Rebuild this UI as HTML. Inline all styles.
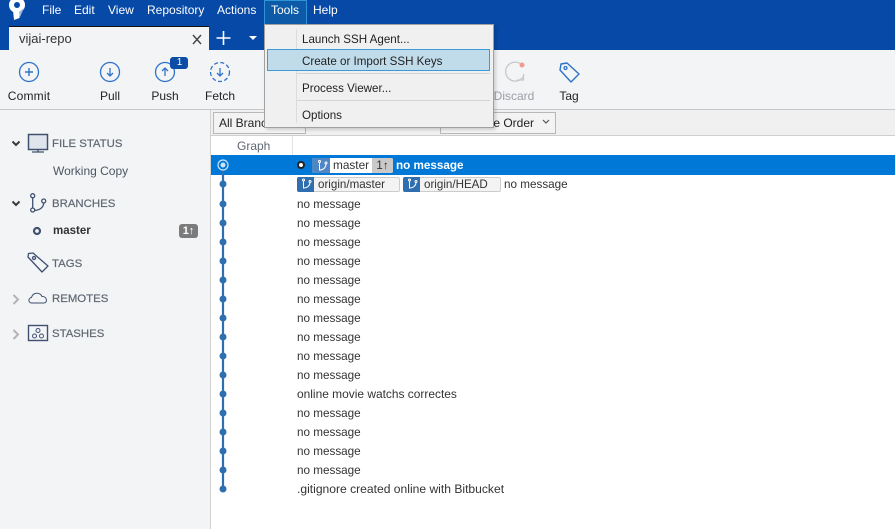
<!DOCTYPE html>
<html><head><meta charset="utf-8"><style>
html,body{margin:0;padding:0;width:895px;height:529px;overflow:hidden;background:#fff}
body{position:relative;font-family:"Liberation Sans",sans-serif;font-size:12.5px;color:#2b2b2b}
svg{overflow:visible}
.a{position:absolute;white-space:nowrap}
.m{position:absolute;top:3px;color:#fff;line-height:14px;font-size:12px}
.t{position:absolute;top:89px;line-height:14px;font-size:12px;color:#222;transform:translateX(-50%);white-space:nowrap}
.s{position:absolute;left:52px;margin-top:1px;font-size:11.4px;color:#5f6873;line-height:14px;white-space:nowrap;-webkit-text-stroke:.2px #5f6873}
.r{position:absolute;left:297px;margin-top:1px;line-height:14px;font-size:11.7px;color:#333;white-space:nowrap}
.i{position:absolute;left:302px;margin-top:1px;font-size:11.6px;line-height:14px;color:#222;white-space:nowrap}
.tag{position:absolute;top:177px;height:13px;background:#f3f3f3;border:1px solid #ccc;border-radius:2px;line-height:14px;font-size:11.6px;color:#333;white-space:nowrap}
.ti{position:absolute;left:-1px;top:-1px;width:17px;height:15px;background:#2f6fb0;border-radius:2px 0 0 2px}
</style></head><body>
<div class="a" style="left:0;top:0;width:895px;height:50px;background:#0749a6"></div>
<svg class="a" style="left:0;top:0" width="30" height="22" viewBox="0 0 30 22"><circle cx="17" cy="5" r="8" fill="#fff"/><path d="M13 10H20L19.500 18L14 20Z" fill="#fff"/><path d="M19 12L24 8L20 17Z" fill="#9cb8de"/><circle cx="17" cy="5" r="3" fill="#0749a6"/></svg>
<div class="m" style="left:42px">File</div><div class="m" style="left:74px">Edit</div><div class="m" style="left:108px">View</div><div class="m" style="left:147px">Repository</div><div class="m" style="left:217px">Actions</div>
<div class="a" style="left:264px;top:0;width:41px;height:23px;background:#0d5aa8;border:1px solid #2f95d6"></div>
<div class="m" style="left:271px">Tools</div><div class="m" style="left:313px">Help</div>
<div class="a" style="left:9px;top:26px;width:200px;height:24px;background:#f3f4f6;border-top:1px solid #111;box-sizing:border-box"></div>
<div class="a" style="left:19px;top:31px;font-size:13px;line-height:15px;color:#333">vijai-repo</div>
<svg class="a" style="left:191px;top:33px" width="15" height="13"><path d="M2 2L10 11M10 2L2 11" stroke="#444" stroke-width="1.4"/></svg>
<svg class="a" style="left:216px;top:31px" width="15" height="15"><path d="M7.500 0V14M.5 7H14.500" stroke="#fff" stroke-width="1.600"/></svg>
<svg class="a" style="left:249px;top:36px" width="9" height="5"><path d="M0 0H8L4 4Z" fill="#fff"/></svg>
<div class="a" style="left:0;top:50px;width:895px;height:59px;background:#f3f4f6"></div>
<div class="a" style="left:0;top:109px;width:895px;height:1px;background:#c8c8c8"></div>
<svg class="a" style="left:0;top:50px" width="600" height="50" fill="none" stroke="#2d73c9" stroke-width="1.300">
<circle cx="29" cy="22" r="9.500"/><path d="M25 22H33M29 18V26" stroke-width="1.400"/>
<circle cx="110" cy="22" r="9.500"/><path d="M110 18V26M107 23L110 26L113 23"/>
<circle cx="165" cy="22" r="9.500"/><path d="M165 18V26M162 21L165 18L168 21"/>
<rect x="170" y="7" width="18" height="12" rx="3" fill="#0a4ca6" stroke="none"/>
<circle cx="220" cy="22" r="9.500" stroke-dasharray="4 2.400"/><path d="M220 18V26M217 23L220 26L223 23"/>
<path d="M522 15A9.500 9.500 0 1 0 523 27M517 30H523.500V24" stroke="#c3c8cd"/><circle cx="522" cy="15" r="2.500" fill="#f39a90" stroke="none"/>
<path d="M560 20L561 14L567 13L579 24L571 32Z" stroke-linejoin="round" stroke-width="1.400"/><circle cx="565.500" cy="18" r="1.500"/>
</svg>
<div class="a" style="left:173px;top:57px;width:13px;text-align:center;font-size:10px;line-height:12px;color:#fff">1</div>
<div class="t" style="left:29px;letter-spacing:.2px">Commit</div><div class="t" style="left:110px">Pull</div><div class="t" style="left:165px">Push</div><div class="t" style="left:220px">Fetch</div>
<div class="t" style="left:514px;color:#9a9ea5">Discard</div><div class="t" style="left:569px">Tag</div>
<div class="a" style="left:0;top:110px;width:210px;height:419px;background:#f3f4f6"></div>
<div class="a" style="left:210px;top:110px;width:1px;height:419px;background:#d2d2d2"></div>
<div class="a" style="left:211px;top:110px;width:684px;height:25px;background:#f0f0f0"></div>
<div class="a" style="left:211px;top:135px;width:684px;height:1px;background:#cfcfcf"></div>
<div class="a" style="left:213px;top:112px;width:86px;height:20px;background:#f3f3f3;border:1px solid #b8b8b8;line-height:20px;padding-left:5px;font-size:12px;color:#222">All Branches</div>
<div class="a" style="left:319px;top:127px;width:14px;height:1px;background:#777"></div>
<div class="a" style="left:440px;top:112px;width:114px;height:20px;background:#f3f3f3;border:1px solid #b8b8b8;line-height:20px;font-size:12px;color:#222;text-align:right;box-sizing:content-box"><span style="position:absolute;right:21px">Date Order</span></div>
<svg class="a" style="left:542px;top:119px" width="8" height="6" fill="none"><path d="M1 1L4 4L7 1" stroke="#555" stroke-width="1.200"/></svg>
<div class="a" style="left:237px;top:139px;font-size:12px;line-height:14px;color:#5f6873">Graph</div>
<div class="a" style="left:292px;top:136px;width:1px;height:19px;background:#e3e3e3"></div>
<div class="a" style="left:211px;top:155px;width:684px;height:20px;background:#0078d7"></div>

<svg class="a" style="left:14px;top:133px" width="50" height="215" fill="none" stroke="#3f5070" stroke-width="1.300">
<path d="M-1.500 8.500L2 12L5.500 8.500" stroke="#3a3a3a" stroke-width="2"/>
<rect x="14.500" y="1.500" width="19" height="15" fill="#e0e4ec" stroke-width="1.500"/><path d="M18 19H30M24 17V19"/>
<path d="M-1.500 68.500L2 72L5.500 68.500" stroke="#3a3a3a" stroke-width="2"/>
<circle cx="18.700" cy="62.700" r="2"/><circle cx="18.700" cy="77" r="2"/><circle cx="29.700" cy="68" r="2"/><path d="M18.700 64.700V75M29.700 70C29.500 75 25 77 20.700 77.500"/>
<circle cx="23" cy="98" r="3" stroke-width="2.200"/>
<path d="M14 124L14.500 120.500L19 120L34 133L28 139Z" stroke-linejoin="round"/><circle cx="20" cy="125" r="1.500"/>
<path d="M-.5 162L4 166.500L-.5 171" stroke="#b4b4b4" stroke-width="2"/>
<path d="M18 170C14 170 14 165 17.500 164.500C19 159 26 159 28 163.500C33 163 34 170 30 170Z" stroke-width="1"/>
<path d="M-.5 197L4 201.500L-.5 206" stroke="#b4b4b4" stroke-width="2"/>
<rect x="14.500" y="192.500" width="19" height="15" stroke-width="1.400"/><circle cx="24" cy="197.500" r="2" stroke-width="1"/><circle cx="20.500" cy="203" r="2" stroke-width="1"/><circle cx="27.500" cy="203" r="2" stroke-width="1"/>
</svg>
<div class="s" style="top:136px">FILE STATUS</div>
<div class="a" style="left:53px;top:164px;font-size:12px;line-height:14px;color:#4b5563">Working Copy</div>
<div class="s" style="top:196px">BRANCHES</div>
<div class="a" style="left:53px;top:224px;color:#333;font-weight:bold;font-size:11.500px;line-height:14px">master</div>
<div class="a" style="left:179px;top:224px;width:19px;height:14px;background:#7b7b7b;border-radius:3px;color:#fff;font-weight:bold;font-size:11px;line-height:14px;text-align:center">1↑</div>
<div class="s" style="top:256px">TAGS</div>
<div class="s" style="top:291px">REMOTES</div>
<div class="s" style="top:326px">STASHES</div>

<svg class="a" style="left:211px;top:155px" width="30" height="345">
<path d="M12 10V334" stroke="#2f6fb0" stroke-width="2.200"/>
<circle cx="12" cy="10" r="5" fill="#0078d7" stroke="#cfe4f7" stroke-width="1.200"/><circle cx="12" cy="10" r="2.500" fill="#cfe4f7"/>
<g fill="#2f6fb0"><circle cx="12" cy="29" r="3.500"/><circle cx="12" cy="49" r="3.500"/><circle cx="12" cy="68" r="3.500"/><circle cx="12" cy="87" r="3.500"/><circle cx="12" cy="106" r="3.500"/><circle cx="12" cy="125" r="3.500"/><circle cx="12" cy="144" r="3.500"/><circle cx="12" cy="163" r="3.500"/><circle cx="12" cy="182" r="3.500"/><circle cx="12" cy="201" r="3.500"/><circle cx="12" cy="220" r="3.500"/><circle cx="12" cy="239" r="3.500"/><circle cx="12" cy="258" r="3.500"/><circle cx="12" cy="277" r="3.500"/><circle cx="12" cy="296" r="3.500"/><circle cx="12" cy="315" r="3.500"/><circle cx="12" cy="334" r="3.500"/></g>
</svg>

<div class="a" style="left:297px;top:161px;width:8px;height:8px;background:#fff;border:2px solid #222;border-radius:50%;box-sizing:border-box"></div>
<div class="a" style="left:312px;top:158px;width:81px;height:15px;background:#fff;border-radius:2px;overflow:hidden;font-size:11.800px;line-height:15px;color:#333">
<div class="a" style="left:0;top:0;width:18px;height:15px;background:#4f86c4"></div>
<div class="a" style="left:21px;top:0">master</div>
<div class="a" style="left:60px;top:0;width:21px;height:15px;background:#c9c9c9;text-align:center">1↑</div></div>
<div class="a" style="left:396px;top:159px;font-size:11.700px;line-height:14px;font-weight:bold;color:#fff">no message</div>

<div class="tag" style="left:297px;width:101px;text-indent:20px"><div class="ti"></div>origin/master</div>
<div class="tag" style="left:403px;width:96px;text-indent:20px"><div class="ti"></div>origin/HEAD</div>
<svg class="a" style="left:0;top:0" width="430" height="195" fill="none" stroke="#fff" stroke-width="1">
<circle cx="319.500" cy="161.500" r="1"/><circle cx="326" cy="163" r="1"/><path d="M319.500 163V170C323 170 325.500 168 326 164.500"/>
<circle cx="303.500" cy="180" r="1"/><path d="M303.500 181.500V188C307 188 309.500 186 310 183"/><circle cx="310" cy="181.500" r="1"/>
<circle cx="409.500" cy="180" r="1"/><path d="M409.500 181.500V188C413 188 415.500 186 416 183"/><circle cx="416" cy="181.500" r="1"/>
</svg>
<div class="a" style="left:504px;top:178px;font-size:11.700px;line-height:14px;color:#333">no message</div>

<div class="r" style="top:197px">no message</div><div class="r" style="top:216px">no message</div><div class="r" style="top:235px">no message</div><div class="r" style="top:254px">no message</div><div class="r" style="top:273px">no message</div><div class="r" style="top:292px">no message</div><div class="r" style="top:311px">no message</div><div class="r" style="top:330px">no message</div><div class="r" style="top:349px">no message</div><div class="r" style="top:368px">no message</div><div class="r" style="top:387px;margin-top:0;font-size:11.950px">online movie watchs correctes</div><div class="r" style="top:406px">no message</div><div class="r" style="top:425px">no message</div><div class="r" style="top:444px">no message</div><div class="r" style="top:463px">no message</div><div class="r" style="top:482px;margin-top:0;font-size:12.100px">.gitignore created online with Bitbucket</div>

<div class="a" style="left:264px;top:24px;width:230px;height:104px;background:#f0f0f0;border:1px solid #a0a0a0;box-sizing:border-box;box-shadow:2px 2px 3px rgba(0,0,0,.15)"></div>
<div class="a" style="left:296px;top:29px;width:1px;height:94px;background:#dcdcdc"></div>
<div class="a" style="left:297px;top:73px;width:193px;height:1px;background:#d4d4d4"></div>
<div class="a" style="left:297px;top:100px;width:193px;height:1px;background:#d4d4d4"></div>
<div class="a" style="left:267px;top:49px;width:223px;height:22px;background:#c0dcea;border:1px solid #3d9ad6;box-sizing:border-box"></div>
<div class="i" style="top:32px">Launch SSH Agent...</div>
<div class="i" style="top:54px">Create or Import SSH Keys</div>
<div class="i" style="top:81px">Process Viewer...</div>
<div class="i" style="top:108px">Options</div>
</body></html>
